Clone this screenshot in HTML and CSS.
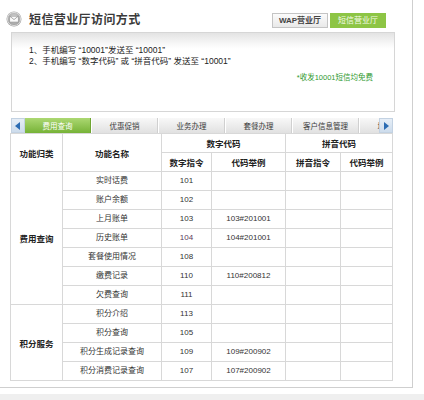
FILE: index.html
```html
<!DOCTYPE html>
<html lang="zh-CN">
<head>
<meta charset="utf-8">
<title>短信营业厅访问方式</title>
<link rel="stylesheet" href="styles.css">
</head>
<body>
<div class="page">
  <div class="card">
    <div class="head">
      <div class="title">
        <span class="icon">
          <svg width="16" height="16" viewBox="0 0 16 16">
            <defs>
              <radialGradient id="g" cx="50%" cy="40%" r="60%">
                <stop offset="0" stop-color="#d4d4d4"/>
                <stop offset="1" stop-color="#9a9a9a"/>
              </radialGradient>
            </defs>
            <circle cx="8" cy="8" r="7.5" fill="url(#g)"/>
            <circle cx="8" cy="8" r="6.6" fill="none" stroke="#e6e6e6" stroke-width="0.8"/>
            <rect x="3.8" y="5.2" width="8.4" height="5.8" fill="#fafafa" stroke="#8a8a8a" stroke-width="0.5"/>
            <path d="M3.9 5.3 L8 8.6 L12.1 5.3" fill="none" stroke="#8a8a8a" stroke-width="0.7"/>
          </svg>
        </span>
        <h1>短信营业厅访问方式</h1>
      </div>
      <div class="btns">
        <span class="btn wap">WAP营业厅</span>
        <span class="btn sms">短信营业厅</span>
      </div>
    </div>

    <div class="info">
      <p>1、手机编写 “10001”发送至 “10001”</p>
      <p>2、手机编写 “数字代码” 或 “拼音代码” 发送至 “10001”</p>
      <p class="free">*收发10001短信均免费</p>
    </div>

    <div class="tabs">
      <span class="arrow left"></span>
      <div class="tablist">
        <span class="tab active">费用查询</span>
        <span class="tab">优惠促销</span>
        <span class="tab">业务办理</span>
        <span class="tab">套餐办理</span>
        <span class="tab">客户信息管理</span>
        <span class="tab">增值业务</span>
      </div>
      <span class="arrow right"></span>
    </div>

    <table class="codes">
      <colgroup>
        <col class="c1"><col class="c2"><col class="c3"><col class="c4"><col class="c5"><col class="c6">
      </colgroup>
      <thead>
        <tr>
          <th rowspan="2">功能归类</th>
          <th rowspan="2">功能名称</th>
          <th colspan="2">数字代码</th>
          <th colspan="2">拼音代码</th>
        </tr>
        <tr>
          <th>数字指令</th>
          <th>代码举例</th>
          <th>拼音指令</th>
          <th>代码举例</th>
        </tr>
      </thead>
      <tbody>
        <tr><td rowspan="7" class="group">费用查询</td><td>实时话费</td><td>101</td><td></td><td></td><td></td></tr>
        <tr><td>账户余额</td><td>102</td><td></td><td></td><td></td></tr>
        <tr><td>上月账单</td><td>103</td><td>103#201001</td><td></td><td></td></tr>
        <tr><td>历史账单</td><td class="visited">104</td><td>104#201001</td><td></td><td></td></tr>
        <tr><td>套餐使用情况</td><td>108</td><td></td><td></td><td></td></tr>
        <tr><td>缴费记录</td><td>110</td><td>110#200812</td><td></td><td></td></tr>
        <tr><td>欠费查询</td><td>111</td><td></td><td></td><td></td></tr>
        <tr><td rowspan="4" class="group">积分服务</td><td>积分介绍</td><td>113</td><td></td><td></td><td></td></tr>
        <tr><td>积分查询</td><td>105</td><td></td><td></td><td></td></tr>
        <tr><td>积分生成记录查询</td><td>109</td><td>109#200902</td><td></td><td></td></tr>
        <tr><td>积分消费记录查询</td><td>107</td><td>107#200902</td><td></td><td></td></tr>
      </tbody>
    </table>
  </div>
  <div class="foot"></div>
</div>
</body>
</html>
```
FILE: styles.css
```css
* { box-sizing: border-box; }
html, body { margin: 0; padding: 0; background: #fff; }
body {
  font-family: "Liberation Sans", "Noto Sans CJK SC", sans-serif;
  color: #333;
  width: 424px;
  height: 400px;
  overflow: hidden;
}
.page { width: 424px; }
.card {
  width: 413px;
  height: 388px;
  border-right: 1px solid #cfcfcf;
  border-bottom: 1px solid #cfcfcf;
  display: flex;
  flex-direction: column;
}
.head {
  height: 32px;
  display: flex;
  justify-content: space-between;
  align-items: flex-start;
  padding: 0 26px 0 6px;
}
.title {
  display: flex;
  align-items: center;
  margin-top: 11px;
}
.icon { width: 16px; height: 16px; display: block; }
.icon svg { display: block; }
.title h1 {
  margin: 0 0 0 7px;
  font-family: "Noto Sans CJK SC", sans-serif;
  font-size: 12px;
  font-weight: bold;
  color: #3a3a3a;
  line-height: 16px;
  letter-spacing: 0.4px;
}
.btns {
  display: flex;
  gap: 2px;
  margin-top: 13px;
}
.btn {
  height: 15px;
  line-height: 13px;
  font-size: 8px;
  padding: 0 4px;
  border: 1px solid #c4c4c4;
  text-align: center;
}
.wap {
  width: 56px;
  background: linear-gradient(#fbfbfb, #e9e9e9);
  color: #444;
  font-weight: bold;
}
.sms {
  width: 56px;
  background: #8dc545;
  border-color: #8dc545;
  color: #f4fbe8;
}
.info {
  margin-left: 11px;
  width: 384px;
  height: 80px;
  border: 1px solid #d6d6d6;
  background: linear-gradient(#e3e3e3, #f6f6f6 10px, #fff 16px);
  padding: 12px 21px 0 17px;
}
.info p {
  margin: 0;
  font-size: 8.5px;
  line-height: 11px;
  color: #222;
}
.info .free {
  text-align: right;
  color: #2f9a2f;
  font-size: 7.5px;
  margin-top: 5px;
}
.tabs {
  margin: 6px 0 0 10px;
  width: 383px;
  height: 15px;
  display: flex;
}
.arrow {
  width: 14px;
  height: 15px;
  background: linear-gradient(#e6eef7, #cddcec);
  border: 1px solid #c3d2e2;
  position: relative;
  flex: none;
}
.arrow::after {
  content: "";
  position: absolute;
  top: 3px;
  border-top: 4px solid transparent;
  border-bottom: 4px solid transparent;
}
.arrow.left { margin-left: 1px; }
.arrow.left::after { left: 3px; border-right: 5px solid #2b6cb3; }
.arrow.right::after { left: 4px; border-left: 5px solid #2b6cb3; }
.tablist {
  flex: 1;
  display: flex;
  overflow: hidden;
  white-space: nowrap;
}
.tab {
  flex: none;
  width: 66px;
  height: 15px;
  line-height: 15px;
  margin-right: 1px;
  text-align: center;
  font-family: "Noto Sans CJK SC", sans-serif;
  font-size: 7.5px;
  color: #3a3a3a;
  background: linear-gradient(#f8f8f8, #e1e1e1);
  border-right: 1px solid #d0d0d0;
}
.tab.active {
  background: linear-gradient(#acd872, #76b237);
  color: #fff;
  border-right-color: #6fa532;
}
.codes {
  margin: 0 0 0 10px;
  width: 382px;
  border-collapse: collapse;
  table-layout: fixed;
  font-size: 8px;
}
.c1 { width: 52px; }
.c2 { width: 99px; }
.c3 { width: 50px; }
.c4 { width: 74px; }
.c5 { width: 55px; }
.c6 { width: 52px; }
.codes th, .codes td {
  border: 1px solid #d8d8d8;
  padding: 0;
  height: 19px;
  text-align: center;
  vertical-align: middle;
  line-height: 12px;
}
.codes th {
  font-family: "Noto Sans CJK SC", sans-serif;
  font-weight: bold;
  font-size: 8.5px;
  color: #222;
}
.codes td { color: #333; }
.codes td.group {
  font-weight: bold;
  font-family: "Noto Sans CJK SC", sans-serif;
  font-size: 8.5px;
  color: #222;
}
.codes td.visited { color: #5a3a5a; }
.foot {
  margin-top: 6px;
  height: 6px;
  background: #efefef;
}
```
